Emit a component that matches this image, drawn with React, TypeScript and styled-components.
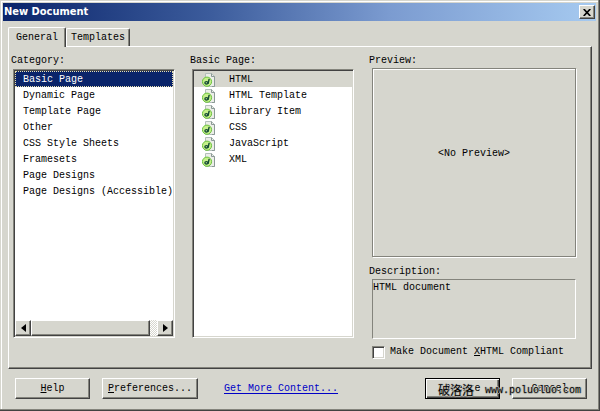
import React, { useState } from "react";
import styled, { createGlobalStyle, css } from "styled-components";

const face = "#d6d6ce";
const shade = "#84847c";
const dark = "#424242";

const GlobalStyle = createGlobalStyle`
  * { box-sizing: border-box; }
  body {
    margin: 0;
    background: ${face};
    color: #000;
    font: 10px/16px "Liberation Mono", "Noto Sans CJK SC", monospace;
  }
  button { font: inherit; color: inherit; }
`;

const raised = css`
  background: ${face};
  border: 1px solid;
  border-color: #fff ${dark} ${dark} #fff;
  box-shadow: inset -1px -1px 0 ${shade};
`;

const Dialog = styled.div`
  display: flex;
  flex-direction: column;
  min-height: 100vh;
  padding: 3px 3px 11px;
  background: ${face};
  border-right: 1px solid ${dark};
  border-bottom: 1px solid ${dark};
  box-shadow: inset -1px -1px 0 ${shade}, inset 1px 1px 0 ${face}, inset 2px 2px 0 #fff;
`;

const TitleBar = styled.header`
  display: flex;
  align-items: center;
  justify-content: space-between;
  height: 18px;
  padding: 0 1px;
  background: linear-gradient(90deg, #0a246a, #3c5c9c 35%, #7b9bd0 65%, #a6caf0);
`;

const Title = styled.h1`
  margin: 0;
  color: #fff;
  font: bold 11px/18px "DejaVu Sans Condensed", "Open Sans", sans-serif;
`;

const CloseButton = styled.button`
  ${raised}
  display: grid;
  place-items: center;
  width: 16px;
  height: 14px;
  padding: 0;
`;

const Tabs = styled.div`
  display: flex;
  align-items: flex-end;
  height: 25px;
  padding: 0 5px;
`;

const Tab = styled.button<{ $active?: boolean }>`
  position: relative;
  z-index: ${(p) => (p.$active ? 1 : 0)};
  height: ${(p) => (p.$active ? 20 : 18)}px;
  width: ${(p) => (p.$active ? 58 : 64)}px;
  margin-bottom: ${(p) => (p.$active ? -1 : 0)}px;
  padding: 0;
  background: ${face};
  border: 1px solid #fff;
  border-right: 1px solid ${dark};
  border-bottom: 0;
  border-radius: 2px 2px 0 0;
  box-shadow: inset -1px 0 0 ${shade};
`;

const Panel = styled.main`
  flex: 1;
  display: grid;
  grid-template-columns: 162fr 162fr 205fr;
  column-gap: 17px;
  margin: 0 4px 0 5px;
  padding: 6px 15px 8px 4px;
  border: 1px solid;
  border-color: #fff ${dark} ${dark} #fff;
  box-shadow: inset -1px -1px 0 ${shade};
`;

const Column = styled.section`
  display: flex;
  flex-direction: column;
  min-width: 0;
`;

const Caption = styled.h2`
  height: 15px;
  margin: 0 0 0 -2px;
  font: inherit;
`;

const ListFrame = styled.div`
  flex: 1;
  display: flex;
  flex-direction: column;
  margin: 1px 0 22px;
  background: #fff;
  border: 1px solid;
  border-color: ${shade} #fff #fff ${shade};
  box-shadow: inset 1px 1px 0 ${dark}, inset -1px -1px 0 ${face};
  padding: 1px;
`;

const List = styled.ul`
  flex: 1;
  margin: 0;
  padding: 0;
  list-style: none;
  overflow: hidden;
`;

const Item = styled.li<{ $look?: "selected" | "muted" }>`
  display: flex;
  align-items: center;
  gap: 13px;
  height: 16px;
  padding: 2px 0 0 8px;
  white-space: nowrap;
  cursor: default;
  ${(p) =>
    p.$look === "selected" &&
    css`
      background: #0a246a;
      color: #fff;
      outline: 1px dotted #e8e0b0;
      outline-offset: -1px;
    `}
  ${(p) => p.$look === "muted" && css`background: ${face};`}
`;

const ScrollBar = styled.div`
  display: flex;
  height: 16px;
  background: repeating-conic-gradient(#fff 0 25%, ${face} 0 50%) 0 0 / 2px 2px;
`;

const ScrollButton = styled.button`
  ${raised}
  display: grid;
  place-items: center;
  width: 16px;
  padding: 0;
`;

const Thumb = styled.div`
  ${raised}
  flex: 1;
  margin-right: 7px;
`;

const Sunken = styled.div`
  border: 1px solid;
  border-color: ${shade} #fff #fff ${shade};
  margin-left: 1px;
`;

const Preview = styled(Sunken)`
  flex: 1;
  display: grid;
  place-items: center;
  padding-bottom: 18px;
  border-color: ${shade};
  box-shadow: inset 1px 1px 0 #fff, 1px 1px 0 #fff;
`;

const Description = styled(Sunken)`
  height: 60px;
  margin-bottom: 5px;
`;

const DescriptionCaption = styled(Caption)`
  margin-top: 7px;
`;

const CheckLabel = styled.label`
  display: flex;
  align-items: center;
  gap: 5px;
  height: 16px;
  margin-left: 1px;
  white-space: nowrap;
`;

const Check = styled.input`
  appearance: none;
  width: 13px;
  height: 13px;
  margin: 0;
  background: #fff;
  border: 1px solid;
  border-color: ${shade} #fff #fff ${shade};
  box-shadow: inset 1px 1px 0 ${dark}, inset -1px -1px 0 ${face};
  &:checked { background: #0a246a; background-clip: content-box; padding: 3px; }
`;

const Footer = styled.footer`
  position: relative;
  display: flex;
  align-items: center;
  gap: 12px;
  margin-top: 9px;
  padding: 0 9px 0 12px;
`;

const PushButton = styled.button<{ $wide?: boolean; $default?: boolean }>`
  ${raised}
  width: ${(p) => (p.$wide ? 96 : 75)}px;
  height: 21px;
  padding: 0;
  ${(p) => p.$default && css`
    border-color: #000;
    box-shadow: inset 1px 1px 0 #fff, inset -1px -1px 0 ${dark}, inset -2px -2px 0 ${shade};
  `}
`;

const MoreLink = styled.a`
  margin: 0 auto 0 14px;
  color: #0000c6;
  text-underline-offset: 2px;
`;

const Watermark = styled.div`
  position: absolute;
  right: 15px;
  bottom: 0;
  display: flex;
  align-items: flex-end;
  gap: 11px;
  color: #000;
  pointer-events: none;
  text-shadow: 1px 0 #adada5, -1px 0 #c6c6be, 0 1px #adada5, 0 -1px #c6c6be;
`;

const WatermarkName = styled.span`
  font: 12px/18px "Noto Sans CJK SC", sans-serif;
`;

function PageIcon() {
  return (
    <svg width="14" height="14" viewBox="0 0 14 14" aria-hidden="true">
      <path d="M3.5.5h6l3 3v10h-9z" fill="#eceee8" stroke="#b4bfbb" />
      <path d="M9.5.5v3h3v10H10" fill="none" stroke="#8b9996" />
      <circle cx="5" cy="8.7" r="4.6" fill="#c6f08a" stroke="#6cc23f" />
      <ellipse cx="4.4" cy="9.8" rx="1.5" ry="1.2" fill="#d9f5a8" stroke="#124b32" strokeWidth="1.3" />
      <path d="M7.2 5.8 6 10.8" stroke="#124b32" strokeWidth="1.4" />
    </svg>
  );
}

function Arrow({ right }: { right?: boolean }) {
  return (
    <svg width="5" height="8" viewBox="0 0 5 8" aria-hidden="true">
      <path d={right ? "M0 0l5 4-5 4z" : "M5 0 0 4l5 4z"} />
    </svg>
  );
}

const categories = [
  "Basic Page", "Dynamic Page", "Template Page", "Other",
  "CSS Style Sheets", "Framesets", "Page Designs", "Page Designs (Accessible)",
];
const pages = ["HTML", "HTML Template", "Library Item", "CSS", "JavaScript", "XML"];

export default function App() {
  const [category, setCategory] = useState(0);
  const [page, setPage] = useState(0);
  return (
    <>
      <GlobalStyle />
      <Dialog role="dialog" aria-label="New Document">
        <TitleBar>
          <Title>New Document</Title>
          <CloseButton aria-label="Close">
            <svg width="8" height="7" viewBox="0 0 8 7" aria-hidden="true">
              <path d="M.7 0 7.3 7M7.3 0 .7 7" stroke="#000" strokeWidth="1.7" />
            </svg>
          </CloseButton>
        </TitleBar>
        <Tabs role="tablist">
          <Tab role="tab" aria-selected="true" $active>General</Tab>
          <Tab role="tab" aria-selected="false">Templates</Tab>
        </Tabs>
        <Panel>
          <Column>
            <Caption id="category">Category:</Caption>
            <ListFrame>
              <List role="listbox" aria-labelledby="category">
                {categories.map((name, i) => (
                  <Item key={name} role="option" aria-selected={i === category}
                    $look={i === category ? "selected" : undefined} onClick={() => setCategory(i)}>
                    {name}
                  </Item>
                ))}
              </List>
              <ScrollBar>
                <ScrollButton aria-label="Scroll left"><Arrow /></ScrollButton>
                <Thumb />
                <ScrollButton aria-label="Scroll right"><Arrow right /></ScrollButton>
              </ScrollBar>
            </ListFrame>
          </Column>
          <Column>
            <Caption id="pages">Basic Page:</Caption>
            <ListFrame>
              <List role="listbox" aria-labelledby="pages">
                {pages.map((name, i) => (
                  <Item key={name} role="option" aria-selected={i === page}
                    $look={i === page ? "muted" : undefined} onClick={() => setPage(i)}>
                    <PageIcon />
                    {name}
                  </Item>
                ))}
              </List>
            </ListFrame>
          </Column>
          <Column>
            <Caption>Preview:</Caption>
            <Preview>&lt;No Preview&gt;</Preview>
            <DescriptionCaption>Description:</DescriptionCaption>
            <Description>HTML document</Description>
            <CheckLabel>
              <Check type="checkbox" />
              <span>Make Document <u>X</u>HTML Compliant</span>
            </CheckLabel>
          </Column>
        </Panel>
        <Footer>
          <PushButton><u>H</u>elp</PushButton>
          <PushButton $wide><u>P</u>references...</PushButton>
          <MoreLink href="#more">Get More Content...</MoreLink>
          <PushButton $default>Create</PushButton>
          <PushButton>Cancel</PushButton>
          <Watermark>
            <WatermarkName>破洛洛</WatermarkName>
            <span>www.poluoluo.com</span>
          </Watermark>
        </Footer>
      </Dialog>
    </>
  );
}
